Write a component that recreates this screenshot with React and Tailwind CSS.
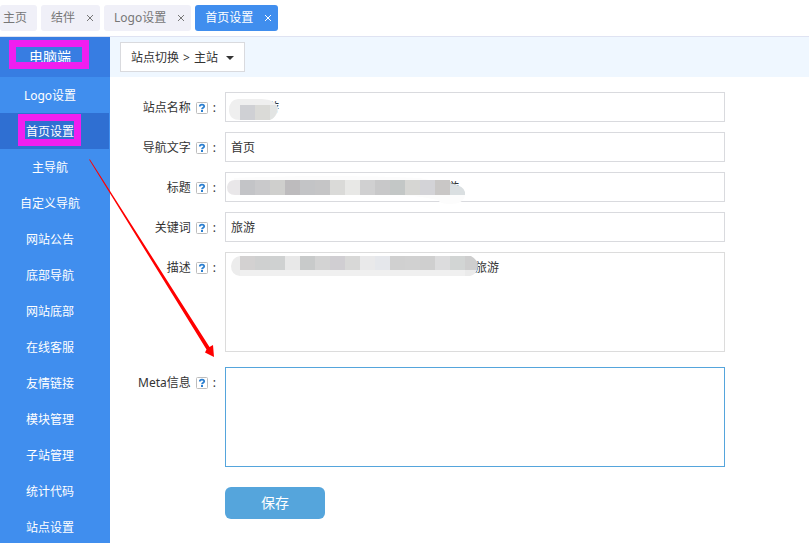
import React from "react";

const TABS = [
  { label: "主页", closable: false },
  { label: "结伴", closable: true },
  { label: "Logo设置", closable: true },
  { label: "首页设置", closable: true, active: true },
];

const MENU = [
  "Logo设置", "首页设置", "主导航", "自定义导航", "网站公告", "底部导航", "网站底部",
  "在线客服", "友情链接", "模块管理", "子站管理", "统计代码", "站点设置",
];

const FIELDS = [
  { id: "site", label: "站点名称", value: "\u3000\u3000\u3000游" },
  { id: "nav", label: "导航文字", value: "首页" },
  { id: "title", label: "标题", value: "\u3000".repeat(18) + "游" },
  { id: "keywords", label: "关键词", value: "旅游" },
  { id: "desc", label: "描述", value: "\u3000".repeat(20) + "\u2004旅游", multiline: true },
  { id: "meta", label: "Meta信息", value: "", multiline: true, focused: true },
];

const TITLE_BLOCKS = ["#c3c4c7", "#c9c9cb", "#cfcfcd", "#bdbbbd", "#c3c4c6", "#c5c5c6", "#dadad8", "#e8e8e6", "#d0d0d1", "#c8c8c9", "#c3c7c6", "#d6d6d3", "#d3d3d7", "#c9c7c6"];
const DESC_BLOCKS = ["#d3d1d1", "#cfd0d0", "#cfd1d1", "#e8e8e8", "#c8caca", "#d3d3d3", "#d0ced2", "#d8d8d7", "#e9e9ea", "#e5e7eb", "#d0d0d0", "#d1d1d1", "#cfcfcf", "#dcdcdd", "#d2d5d4"];

function Tab({ label, closable, active }) {
  return (
    <div className={`flex h-[26px] items-center rounded-[3px] text-xs ${active ? "bg-[#408eee] text-white" : "bg-[#f0f0f8] text-[#777]"} ${closable ? "pr-[6px] pl-[10px]" : "pr-[10px] pl-[3px]"}`}>
      <button type="button">{label}</button>
      {closable && (
        <button type="button" aria-label="关闭" className="ml-[11px] flex h-2 w-2 items-center justify-center">
          <svg viewBox="0 0 8 8" className="h-2 w-2" fill="none" stroke="currentColor"><path d="M1 1l6 6M7 1L1 7" /></svg>
        </button>
      )}
    </div>
  );
}

function HelpIcon() {
  return (
    <svg viewBox="0 0 12 12" className="h-3 w-3 shrink-0" aria-hidden="true">
      <rect x="0.5" y="0.5" width="11" height="11" rx="1" fill="#fff" stroke="#bdbdbd" />
      <path d="M3.800 4.500C3.800 2 8.200 2 8.200 4.300C8.200 5.800 6 5.600 6 7.300" fill="none" stroke="#2b7fd0" strokeWidth="1.800" />
      <rect x="5" y="8" width="2" height="2" fill="#2b7fd0" />
    </svg>
  );
}

function Field({ id, label, value, multiline, focused }) {
  const box = "w-full max-w-[500px] border px-[5px] text-xs text-[#333] outline-none";
  return (
    <div className="flex items-start">
      <label htmlFor={id} className="flex h-8 w-[115px] shrink-0 items-center justify-end gap-[5px] pr-[9px] text-xs text-[#333]">
        {label}
        <HelpIcon />
        <span>:</span>
      </label>
      {multiline ? (
        <textarea id={id} defaultValue={value} className={`${box} block h-[100px] resize-none py-[6px] leading-[18px] ${focused ? "border-[#55a5dc]" : "border-[#dcdcdc]"}`} />
      ) : (
        <input id={id} type="text" defaultValue={value} className={`${box} h-[30px] border-[#d9dade]`} />
      )}
    </div>
  );
}

function Annotations() {
  return (
    <svg className="pointer-events-none absolute top-0 left-0" width="809" height="543" aria-hidden="true">
      <path fillRule="evenodd" d="M9 40H89V69H9ZM16 47V62H82V47Z" fill="#f01ef0" />
      <path fillRule="evenodd" d="M18 114H81V146H18ZM25 121V139H74V121Z" fill="#f01ef0" />
      <path d="M89 159.500L90 159.500L209.500 347L213 345L214 357L205 352.500L206.500 349.500Z" fill="#f00" />

      <path d="M238 99H262Q278 100 278 110Q276 120 266 120H240Q229 120 229 110Q229 100 238 99Z" fill="#efefef" />
      <rect x="240" y="105" width="15" height="15" fill="#cfd0d4" />
      <rect x="255" y="105" width="15" height="15" fill="#dadad7" />
      <path d="M270 105H277V112Q275 118 270 120Z" fill="#e2e4e3" />

      <path d="M234 178Q340 174 420 178L438 182Q466 184 465 195Q464 204 450 204Q440 204 438 200Q420 196 400 195H236Z" fill="#fcfcfc" />
      <path d="M240 180V195H235Q227 195 227 187Q228 180 235 180Z" fill="#e9e7e9" />
      {TITLE_BLOCKS.map((c, i) => <rect key={i} x={240 + i * 15} y="180" width="15" height="15" fill={c} />)}
      <path d="M450 183Q464 186 465 192V195H450Z" fill="#dadfe1" />

      <path d="M240 256V276Q231 275 231 266Q232 257 240 256Z" fill="#ececec" />
      {DESC_BLOCKS.map((c, i) => (
        <g key={i}>
          <rect x={240 + i * 15} y="256" width="15" height="14" fill={c} />
          <rect x={240 + i * 15} y="270" width="15" height="6" fill="#f0f0f0" />
        </g>
      ))}
      <path d="M465 256H471Q478 260 478 266L477 270H465Z" fill="#cecece" />
      <path d="M465 270H477Q475 275 470 276H465Z" fill="#ebebeb" />
    </svg>
  );
}

export default function App() {
  return (
    <div className="relative flex h-screen flex-col overflow-hidden bg-white font-['Noto_Sans','Noto_Sans_CJK_SC',sans-serif]">
      <nav className="flex h-[37px] shrink-0 items-start gap-1 border-b border-[#dfe3f2] pt-[5px]">
        {TABS.map((t) => <Tab key={t.label} {...t} />)}
      </nav>
      <div className="flex min-h-0 flex-1">
        <aside className="w-[110px] shrink-0 overflow-hidden bg-[#408eee] text-white">
          <h1 className="flex h-10 items-center justify-center bg-[#377de2] pr-[10px] text-sm">电脑端</h1>
          <ul>
            {MENU.map((m) => (
              <li key={m} className="pr-px">
                <a href="#" className={`flex h-9 items-center justify-center pt-[2px] pr-[9px] text-xs ${m === "首页设置" ? "bg-[#2f6fd2]" : ""}`}>{m}</a>
              </li>
            ))}
          </ul>
        </aside>
        <main className="min-w-0 flex-1">
          <div className="flex h-10 items-center bg-[#eff7ff] px-[10px]">
            <button type="button" className="flex h-[30px] items-center gap-1 border border-[#d9dade] bg-white px-[10px] pt-[2px] text-xs text-[#333]">
              <span>站点切换</span>
              <span>&gt;</span>
              <span>主站</span>
              <svg viewBox="0 0 8 4" className="ml-1 h-1 w-2" aria-hidden="true"><path d="M0 0h8L4 4z" fill="#333" /></svg>
            </button>
          </div>
          <form className="pt-[15px] pr-4">
            <div className="grid auto-rows-min gap-2">
              {FIELDS.slice(0, 5).map((f) => <Field key={f.id} {...f} />)}
            </div>
            <div className="mt-[15px]"><Field {...FIELDS[5]} /></div>
            <button type="button" className="mt-5 ml-[115px] h-8 w-[100px] rounded-md bg-[#55a5dc] text-sm text-white">保存</button>
          </form>
        </main>
      </div>
      <Annotations />
    </div>
  );
}
